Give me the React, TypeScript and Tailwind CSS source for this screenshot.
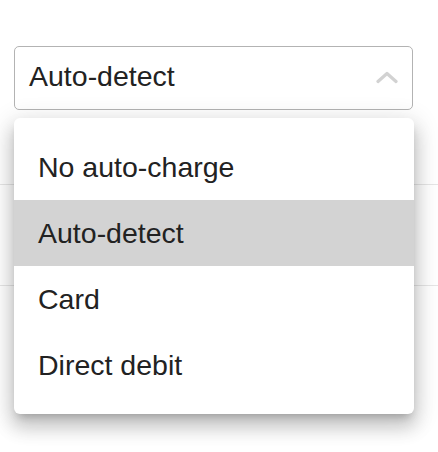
const options = ['No auto-charge', 'Auto-detect', 'Card', 'Direct debit']

export default function App() {
  const selected = 'Auto-detect'

  return (
    <div
      className="relative w-[438px] h-[452px] bg-white overflow-hidden text-[#222222]"
      style={{ fontFamily: '"Liberation Sans", Arial, sans-serif' }}
    >
      <div className="pt-[46px] px-[14px] pr-[25px]">
        {/* Select trigger */}
        <div className="flex items-center h-[64px] border border-[#b3b3b3] rounded-[5px] pl-[14px] pr-[14px]">
          <span className="flex-1 text-[28.5px] leading-none -mt-[4px]">{selected}</span>
          <svg
            className="w-[22px] h-[14px] text-[#d2d2d2] -mt-[2px]"
            viewBox="0 0 22 14"
            fill="none"
            stroke="currentColor"
            aria-hidden="true"
          >
            <path d="M2 11.5L11 3.5l9 8" strokeWidth={3.2} strokeLinecap="round" strokeLinejoin="round" />
          </svg>
        </div>
      </div>

      {/* Rows behind the menu */}
      <div className="flex flex-col">
        <div className="h-[75px] border-b border-[#e6e6e6]" />
        <div className="h-[101px] border-b border-[#e6e6e6]" />
      </div>

      {/* Dropdown menu */}
      <div className="absolute left-[14px] top-[118px] w-[400px] bg-white rounded-[6px] py-[16px] shadow-[0px_6px_8px_-4px_rgba(0,0,0,0.22),0px_13px_18px_2px_rgba(0,0,0,0.15),0px_5px_24px_4px_rgba(0,0,0,0.12)]">
        {options.map((o) => (
          <div
            key={o}
            className={`flex items-center h-[66px] px-[24px] text-[28.5px] leading-none ${
              o === selected ? 'bg-[#d3d3d3]' : ''
            }`}
          >
            <span className="mt-[1px]">{o}</span>
          </div>
        ))}
      </div>
    </div>
  )
}
